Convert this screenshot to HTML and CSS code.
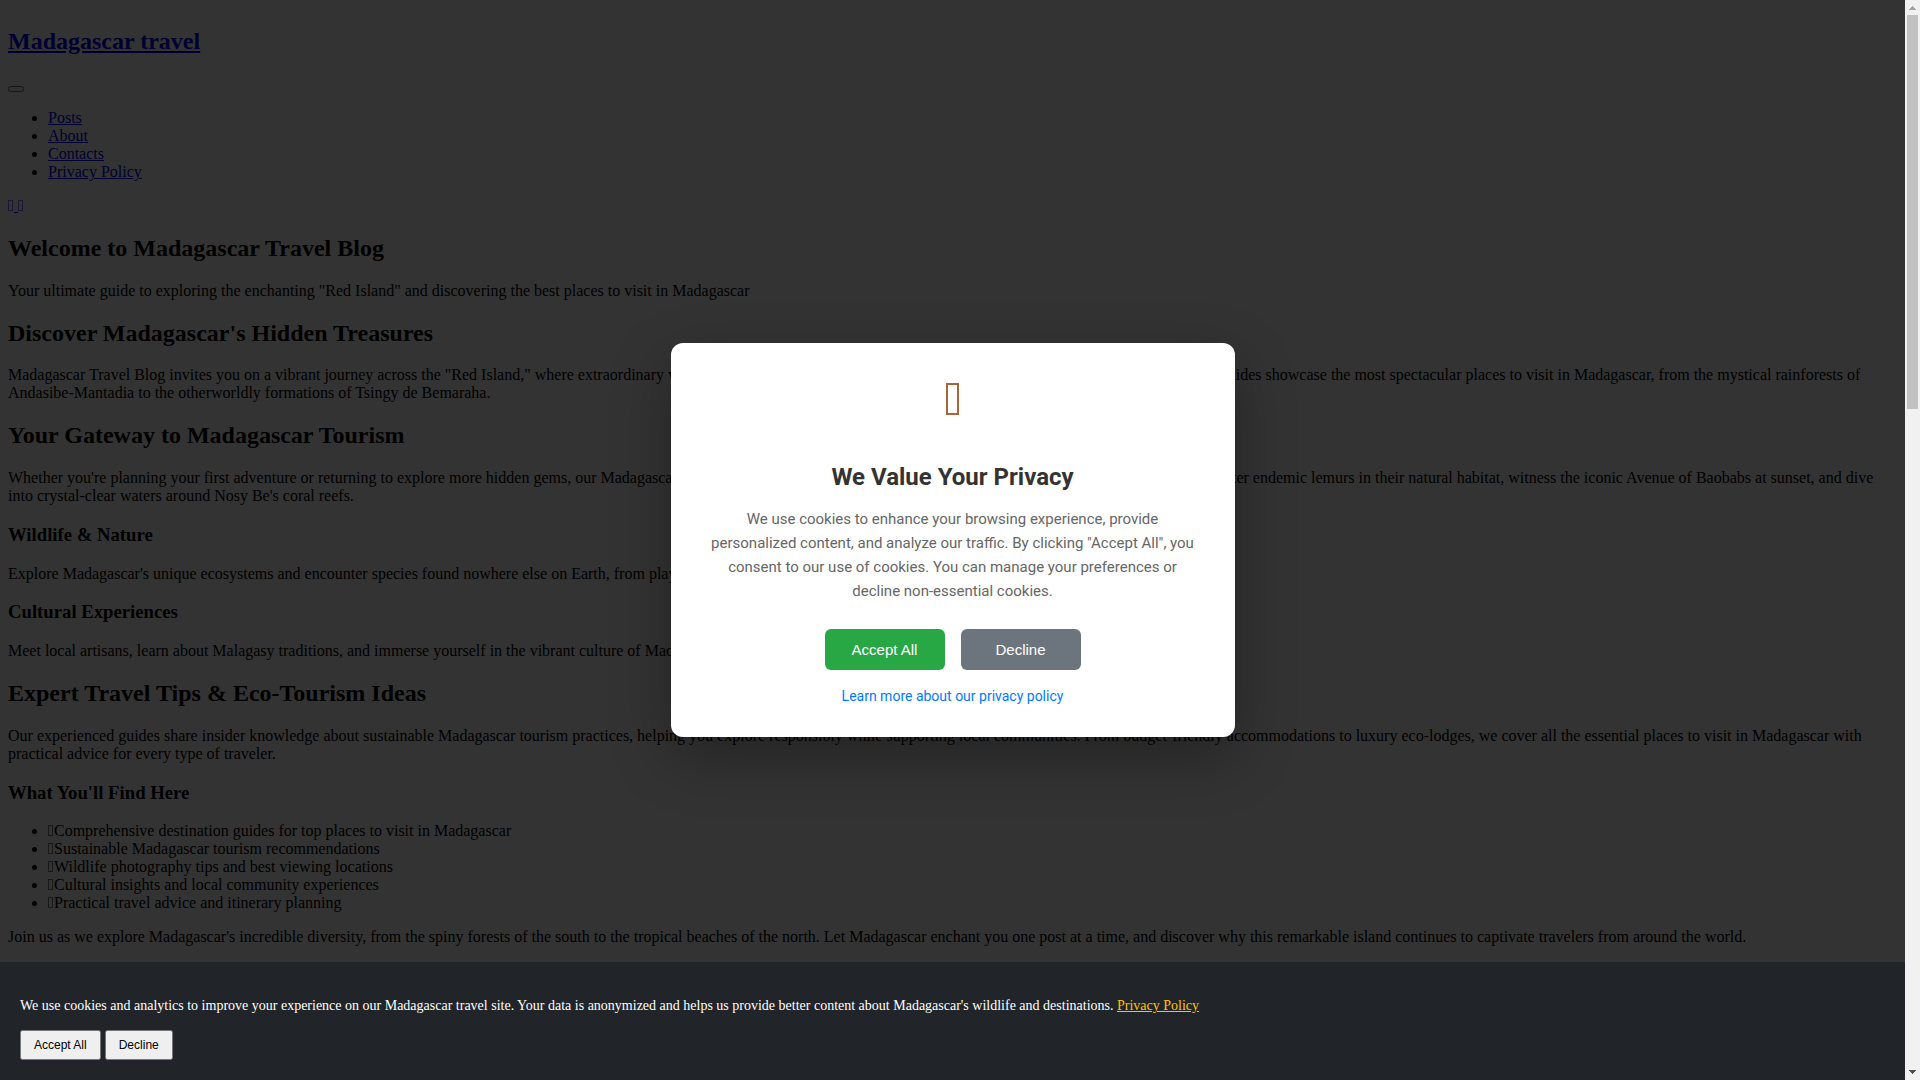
FILE: index.html
```html
<!DOCTYPE html>
<html lang="en">
<head>
  <meta charset="UTF-8">
  <title>Madagascar travel</title>
  <meta name="viewport" content="width=device-width, initial-scale=1.0">
  <link rel="stylesheet" href="styles.css">
</head>
<body>

  <div class="page">
    <header class="site-header">
      <h2><a href="#">Madagascar travel</a></h2>
      <button class="menu-toggle" aria-label="Menu"></button>
      <ul>
        <li><a href="#">Posts</a></li>
        <li><a href="#">About</a></li>
        <li><a href="#">Contacts</a></li>
        <li><a href="#">Privacy Policy</a></li>
      </ul>
      <div class="social"><a href="#"><i class="icon"></i>&nbsp;</a><a href="#"><i class="icon"></i></a></div>
    </header>

    <main>
      <h2>Welcome to Madagascar Travel Blog</h2>
      <p>Your ultimate guide to exploring the enchanting "Red Island" and discovering the best places to visit in Madagascar</p>

      <h2>Discover Madagascar's Hidden Treasures</h2>
      <p>Madagascar Travel Blog invites you on a vibrant journey across the "Red Island," where extraordinary wildlife, breathtaking landscapes and rich cultural heritage await. Our comprehensive guides showcase the most spectacular places to visit in Madagascar, from the mystical rainforests of Andasibe-Mantadia to the otherworldly formations of Tsingy de Bemaraha.</p>

      <h2>Your Gateway to Madagascar Tourism</h2>
      <p>Whether you're planning your first adventure or returning to explore more hidden gems, our Madagascar tourism resources help you create unforgettable experiences across the island. Encounter endemic lemurs in their natural habitat, witness the iconic Avenue of Baobabs at sunset, and dive into crystal-clear waters around Nosy Be's coral reefs.</p>

      <h3>Wildlife &amp; Nature</h3>
      <p>Explore Madagascar's unique ecosystems and encounter species found nowhere else on Earth, from playful lemurs to colorful chameleons.</p>

      <h3>Cultural Experiences</h3>
      <p>Meet local artisans, learn about Malagasy traditions, and immerse yourself in the vibrant culture of Madagascar's diverse communities.</p>

      <h2>Expert Travel Tips &amp; Eco-Tourism Ideas</h2>
      <p>Our experienced guides share insider knowledge about sustainable Madagascar tourism practices, helping you explore responsibly while supporting local communities. From budget-friendly accommodations to luxury eco-lodges, we cover all the essential places to visit in Madagascar with practical advice for every type of traveler.</p>

      <h3>What You'll Find Here</h3>
      <ul>
        <li><i class="icon"></i>Comprehensive destination guides for top places to visit in Madagascar</li>
        <li><i class="icon"></i>Sustainable Madagascar tourism recommendations</li>
        <li><i class="icon"></i>Wildlife photography tips and best viewing locations</li>
        <li><i class="icon"></i>Cultural insights and local community experiences</li>
        <li><i class="icon"></i>Practical travel advice and itinerary planning</li>
      </ul>
      <p>Join us as we explore Madagascar's incredible diversity, from the spiny forests of the south to the tropical beaches of the north. Let Madagascar enchant you one post at a time, and discover why this remarkable island continues to captivate travelers from around the world.</p>
    </main>

    <!-- Privacy modal -->
    <div class="overlay">
      <div class="modal" role="dialog" aria-labelledby="modal-title">
        <div class="modal-icon"></div>
        <h3 id="modal-title">We Value Your Privacy</h3>
        <p>We use cookies to enhance your browsing experience, provide personalized content, and analyze our traffic. By clicking "Accept All", you consent to our use of cookies. You can manage your preferences or decline non-essential cookies.</p>
        <div class="modal-buttons">
          <button class="btn btn-accept">Accept All</button>
          <button class="btn btn-decline">Decline</button>
        </div>
        <a class="modal-link" href="#">Learn more about our privacy policy</a>
      </div>
    </div>

    <!-- Bottom cookie banner -->
    <div class="cookie-banner">
      <p>We use cookies and analytics to improve your experience on our Madagascar travel site. Your data is anonymized and helps us provide better content about Madagascar's wildlife and destinations. <a href="#">Privacy Policy</a></p>
      <button>Accept All</button>
      <button>Decline</button>
    </div>
  </div>

  <div class="scrollbar" aria-hidden="true">
    <svg class="arrow-up" width="7" height="4" viewBox="0 0 7 4" shape-rendering="crispEdges"><path d="M3 0h1v1h1v1h1v1h1v1H0V3h1V2h1V1h1z"/></svg>
    <div class="track"><div class="thumb"></div></div>
    <svg class="arrow-down" width="7" height="4" viewBox="0 0 7 4" shape-rendering="crispEdges"><path d="M0 0h7v1H6v1H5v1H4v1H3V3H2V2H1V1H0z"/></svg>
  </div>

</body>
</html>
```

FILE: styles.css
```css
html, body {
  height: 100%;
}

body {
  margin: 0;
  display: flex;
  overflow: hidden;
  font-family: 'Liberation Serif', serif;
  font-size: 16px;
}

/* the transform keeps the fixed layers inside the page, beside the scrollbar */
.page {
  flex: 1;
  min-width: 0;
  box-sizing: border-box;
  height: 100vh;
  padding: 8px;
  overflow: hidden;
  transform: translate(0);
}

.site-header {
  display: flow-root;
}

.page a {
  color: #0000ee;
}

/* small outlined box standing in for an icon */
.icon {
  display: inline-block;
  box-sizing: border-box;
  width: 5px;
  height: 11px;
  margin-right: 1px;
  border: 1px solid;
  opacity: 0.5;
}

/* Modal */
.overlay {
  position: fixed;
  inset: 0;
  display: flex;
  align-items: center;
  justify-content: center;
  background: rgba(0, 0, 0, 0.8);
  z-index: 10;
}

.modal {
  max-width: 500px;
  padding: 32px;
  border-radius: 12px;
  background: #fff;
  box-shadow: 0 20px 60px rgba(0, 0, 0, 0.3);
  font-family: Roboto, sans-serif;
  text-align: center;
}

.modal-icon {
  box-sizing: border-box;
  width: 13px;
  height: 32px;
  margin: 8px auto 48px;
  border: 2px solid #a5663c;
}

.modal h3 {
  margin: 0 0 16px;
  font-size: 24px;
  line-height: 28px;
  color: #333;
}

.modal p {
  margin: 0 0 26px;
  font-size: 15px;
  line-height: 24px;
  color: #666;
}

.modal-buttons {
  display: flex;
  justify-content: center;
  gap: 16px;
  margin-bottom: 16px;
}

.btn {
  min-width: 120px;
  padding: 12px 24px;
  border: none;
  border-radius: 6px;
  font-family: 'Liberation Sans', sans-serif;
  font-size: 15px;
  color: #fff;
  cursor: pointer;
}

.btn-accept {
  background: #28a745;
}

.btn-decline {
  background: #6c757d;
}

.page .modal-link {
  font-size: 14px;
  color: #007bff;
  text-decoration: none;
}

/* Cookie banner */
.cookie-banner {
  position: fixed;
  left: 0;
  right: 0;
  bottom: 0;
  padding: 20px;
  background: #212529;
  color: #fff;
  z-index: 20;
}

.cookie-banner p {
  margin: 16px 0;
  font-size: 14px;
}

.page .cookie-banner a {
  color: #ffc107;
}

.cookie-banner button {
  padding: 6px 12px;
  font-family: 'Liberation Sans', sans-serif;
  font-size: 12px;
}

/* Scrollbar */
.scrollbar {
  display: flex;
  flex-direction: column;
  align-items: center;
  width: 15px;
  padding: 6px 0;
  box-sizing: border-box;
  background: #f1f1f1;
}

.arrow-up {
  fill: #a3a3a3;
}

.arrow-down {
  fill: #505050;
}

.track {
  flex: 1;
  width: 11px;
  padding: 5px 0;
}

.thumb {
  height: 37.5%;
  background: #c1c1c1;
}
```
